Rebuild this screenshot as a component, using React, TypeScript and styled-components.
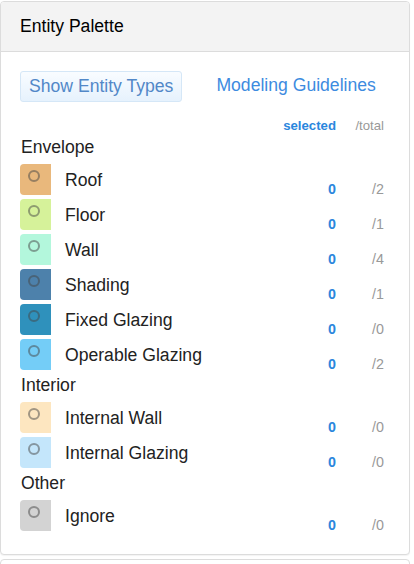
import React from 'react';
import styled, {createGlobalStyle} from "styled-components";

type EntityType = {
    name: string;
    color: string;
    total: number;
}

type GroupType = {
    title: string;
    items: EntityType[];
}

const groups: GroupType[] = [
    {
        title: "Envelope",
        items: [
            {name: "Roof", color: "#e9b87c", total: 2},
            {name: "Floor", color: "#d6f29a", total: 1},
            {name: "Wall", color: "#b3f7dc", total: 4},
            {name: "Shading", color: "#4d81ab", total: 1},
            {name: "Fixed Glazing", color: "#2f91bc", total: 0},
            {name: "Operable Glazing", color: "#74cdf7", total: 2},
        ]
    },
    {
        title: "Interior",
        items: [
            {name: "Internal Wall", color: "#fde6c0", total: 0},
            {name: "Internal Glazing", color: "#c4e6fb", total: 0},
        ]
    },
    {
        title: "Other",
        items: [
            {name: "Ignore", color: "#d3d3d3", total: 0},
        ]
    },
]

const GlobalStyle = createGlobalStyle`
  body {
    margin: 0;
    background: #fff;
    font-family: "Liberation Sans", Arial, sans-serif;
    color: #333;
  }
`

const EntityRow = (props: EntityType) => {
    return (
        <Row>
            <Swatch color={props.color}>
                <Radio/>
            </Swatch>
            <Label>{props.name}</Label>
            <Selected>0</Selected>
            <Total>/{props.total}</Total>
        </Row>
    );
};

export default function App() {
    return (
        <>
            <GlobalStyle/>
            <Panel>
                <Header>Entity Palette</Header>
                <Body>
                    <Toolbar>
                        <TypesButton>Show Entity Types</TypesButton>
                        <GuideLink href={"#"}>Modeling Guidelines</GuideLink>
                    </Toolbar>
                    <Legend>
                        <Selected>selected</Selected>
                        <Total>/total</Total>
                    </Legend>
                    {groups.map(g => (
                        <Group key={g.title}>
                            <GroupTitle>{g.title}</GroupTitle>
                            {g.items.map(item => <EntityRow key={item.name} {...item}/>)}
                        </Group>
                    ))}
                </Body>
            </Panel>
            <NextPanel/>
        </>
    );
}

const Panel = styled.div`
  margin-top: 1px;
  width: 408px;
  border: 1px solid #dcdcdc;
  border-radius: 4px;
  background: #fff;
  box-shadow: 0 1px 1px rgba(0,0,0,0.05);
  overflow: hidden;
`

const NextPanel = styled.div`
  margin-top: 4px;
  width: 408px;
  height: 20px;
  border: 1px solid #dcdcdc;
  border-radius: 4px;
`

const Header = styled.div`
  height: 50px;
  padding: 14px 19px 0;
  box-sizing: border-box;
  background: #f3f3f3;
  border-bottom: 1px solid #dcdcdc;
  font-size: 17.6px;
  line-height: 20px;
  color: #000;
`

const Body = styled.div`
  padding: 19px 25px 19px 19px;
`

const Toolbar = styled.div`
  display: flex;
  align-items: center;
  gap: 34px;
`

const TypesButton = styled.button`
  height: 31px;
  padding: 0 8px;
  border: 1px solid #d5e7f7;
  border-radius: 3px;
  background: linear-gradient(#f9fcff, #e6f2fd);
  color: #5288c8;
  font-family: inherit;
  font-size: 17.6px;
`

const GuideLink = styled.a`
  color: #3d8be0;
  font-size: 17.6px;
  text-decoration: none;
  margin-top: -3px;
`

const Legend = styled.div`
  display: flex;
  justify-content: flex-end;
  margin-top: 14px;
  height: 20px;
  line-height: 20px;
`

const Selected = styled.span`
  width: 60px;
  text-align: right;
  font-size: 13.2px;
  font-weight: bold;
  color: #2b86dd;
`

const Total = styled.span`
  width: 48px;
  text-align: right;
  font-size: 13.2px;
  color: #999;
`

const Group = styled.div`
  display: flex;
  flex-direction: column;
`

const GroupTitle = styled.div`
  font-size: 17.6px;
  line-height: 22px;
  margin: 0 0 6px 1px;
  color: #222;
`

const Row = styled.div`
  display: flex;
  align-items: flex-start;
  height: 31px;
  margin-bottom: 4px;

  ${Selected}, ${Total} {
    padding-top: 17px;
    font-size: 14.3px;
    line-height: 16px;
  }
`

const Swatch = styled.div<{color: string}>`
  position: relative;
  width: 31px;
  height: 31px;
  flex-shrink: 0;
  border-radius: 4px 0 0 4px;
  background: ${props => props.color};
`

const Radio = styled.span`
  position: absolute;
  left: 8px;
  top: 6px;
  width: 8px;
  height: 8px;
  border: 2px solid rgba(70,70,70,0.5);
  border-radius: 50%;
`

const Label = styled.div`
  flex: 1;
  margin-left: 14px;
  padding-top: 6px;
  font-size: 17.6px;
  line-height: 20px;
  color: #222;
`
